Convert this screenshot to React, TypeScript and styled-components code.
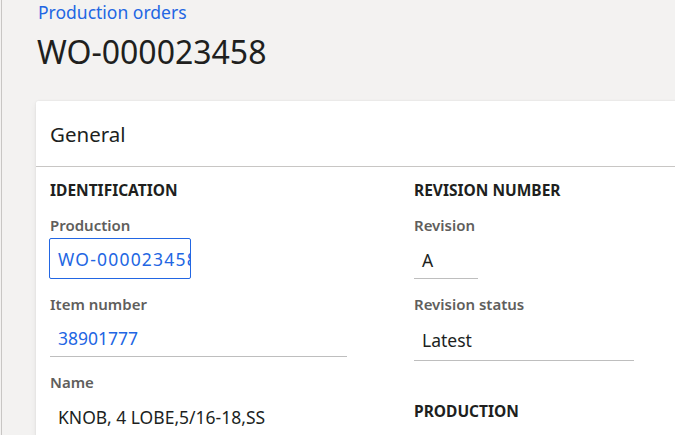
import styled, { createGlobalStyle } from 'styled-components';

const GlobalStyle = createGlobalStyle`
  html, body {
    margin: 0;
    padding: 0;
    overflow: hidden;
    background: #f3f2f1;
  }
  body {
    font-family: 'Noto Sans', 'Open Sans', sans-serif;
    color: #201f1e;
  }
`;

const Page = styled.div`
  margin-left: 1px;
  border-left: 1px solid #c8c6c4;
  min-height: 435px;
  padding: 0 0 0 34px;
  background: #f3f2f1;
  box-sizing: border-box;
`;

const Breadcrumb = styled.a`
  display: block;
  padding: 1px 0 0 2px;
  height: 24px;
  line-height: 22px;
  font-size: 17.5px;
  color: #2266e3;
  text-decoration: none;
`;

const Title = styled.h1`
  margin: 0;
  padding: 4px 0 0 1px;
  height: 50px;
  line-height: 46px;
  font-size: 32px;
  font-weight: 400;
  color: #201f1e;
`;

const Card = styled.section`
  margin-top: 22px;
  width: 700px;
  background: #fff;
  border-radius: 2px;
  box-shadow: 0 0.6px 1.8px rgba(0, 0, 0, 0.1), 0 3px 7px rgba(0, 0, 0, 0.06);
`;

const CardHeader = styled.header`
  height: 65px;
  padding: 0 14px;
  display: flex;
  align-items: center;
  border-bottom: 1px solid #c8c6c4;
  font-size: 20.5px;
  font-weight: 400;
`;

const CardBody = styled.div`
  display: grid;
  grid-template-columns: 364px 1fr;
  padding: 0 14px;
`;

const Column = styled.div`
  display: flex;
  flex-direction: column;
`;

const SectionTitle = styled.h2<{ $top: number }>`
  margin: ${(p) => p.$top}px 0 0;
  height: 20px;
  line-height: 20px;
  font-size: 15.5px;
  font-weight: 700;
  color: #201f1e;
`;

const Field = styled.div`
  margin-top: 15px;
  display: flex;
  flex-direction: column;
`;

const Label = styled.label`
  height: 20px;
  line-height: 20px;
  font-size: 15px;
  font-weight: 600;
  color: #605e5c;
  margin-bottom: 3px;
`;

const InputBox = styled.div`
  box-sizing: border-box;
  width: 142px;
  height: 41px;
  margin-left: -1px;
  padding: 0 0 0 8px;
  border: 1px solid #2266e3;
  border-radius: 2px;
  overflow: hidden;
  white-space: nowrap;
  display: flex;
  align-items: center;
  font-size: 17.5px;
  letter-spacing: 1.2px;
  color: #2266e3;
`;

const Value = styled.div<{ $width: number; $height: number; $link?: boolean }>`
  box-sizing: border-box;
  width: ${(p) => p.$width}px;
  height: ${(p) => p.$height}px;
  padding: 3px 0 0 8px;
  display: flex;
  align-items: center;
  font-size: 17.5px;
  color: ${(p) => (p.$link ? '#2266e3' : '#201f1e')};
  border-bottom: 1px solid #bebebe;
  white-space: nowrap;
`;

const PlainValue = styled.div`
  height: 41px;
  padding: 1px 0 0 8px;
  display: flex;
  align-items: center;
  font-size: 17.5px;
  white-space: nowrap;
`;

export default function App() {
  return (
    <>
      <GlobalStyle />
      <Page>
        <Breadcrumb href="#">Production orders</Breadcrumb>
        <Title>WO-000023458</Title>
        <Card>
          <CardHeader>General</CardHeader>
          <CardBody>
            <Column>
              <SectionTitle $top={13}>IDENTIFICATION</SectionTitle>
              <Field>
                <Label>Production</Label>
                <InputBox>WO-000023458</InputBox>
              </Field>
              <Field>
                <Label>Item number</Label>
                <Value $width={297} $height={40} $link>
                  38901777
                </Value>
              </Field>
              <Field>
                <Label>Name</Label>
                <PlainValue>KNOB, 4 LOBE,5/16-18,SS</PlainValue>
              </Field>
            </Column>
            <Column>
              <SectionTitle $top={13}>REVISION NUMBER</SectionTitle>
              <Field>
                <Label>Revision</Label>
                <Value $width={64} $height={41}>
                  A
                </Value>
              </Field>
              <Field>
                <Label>Revision status</Label>
                <Value $width={220} $height={44}>
                  Latest
                </Value>
              </Field>
              <SectionTitle $top={40}>PRODUCTION</SectionTitle>
            </Column>
          </CardBody>
        </Card>
      </Page>
    </>
  );
}
